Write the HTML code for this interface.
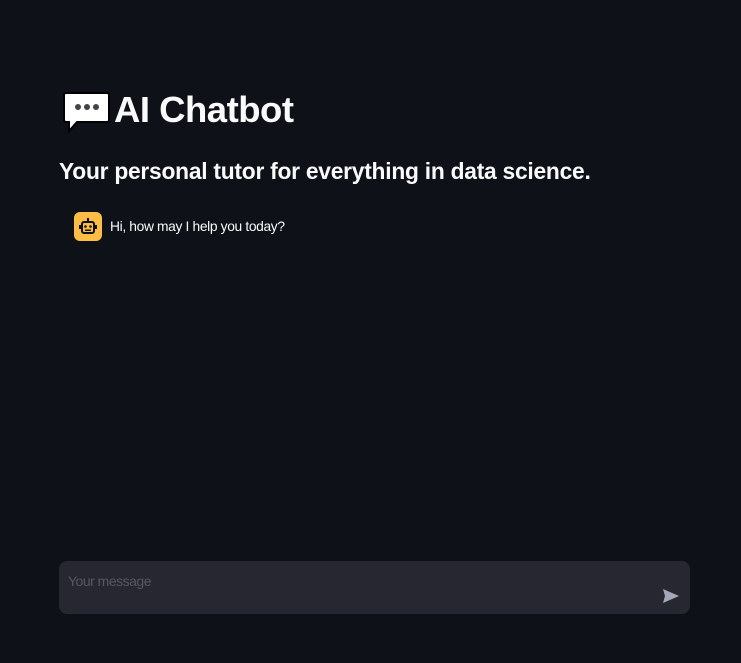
<!DOCTYPE html>
<html><head><style>
html,body{margin:0;padding:0;background:#0e1117;width:741px;height:663px;overflow:hidden;font-family:"Liberation Sans",sans-serif;color:#fafafa}
.t{position:absolute;left:114px;top:89px;font-size:36.5px;font-weight:bold;letter-spacing:-0.5px}
.s{position:absolute;left:59px;top:158px;font-size:22.8px;font-weight:bold;letter-spacing:-0.25px}
.av{position:absolute;left:74px;top:212px;width:28px;height:29px;background:#ffbd45;border-radius:6px}
.m{position:absolute;left:110px;top:219px;font-size:13.8px;letter-spacing:-0.35px}
.in{position:absolute;left:59px;top:561px;width:631px;height:53px;background:#262730;border-radius:8px}
.ph{position:absolute;left:9px;top:12px;font-size:14px;color:#555862;letter-spacing:-0.5px}
</style></head><body>
<svg style="position:absolute;left:63px;top:91px" width="48" height="42" viewBox="0 0 48 42">
<path d="M3 2h41a2 2 0 0 1 2 2v25a2 2 0 0 1-2 2H14l-8 9v-9H3a2 2 0 0 1-2-2V4a2 2 0 0 1 2-2z" fill="#fff" stroke="#000" stroke-width="2"/>
<circle cx="15" cy="16" r="3" fill="#444"/><circle cx="24" cy="16" r="3" fill="#444"/><circle cx="33" cy="16" r="3" fill="#444"/>
</svg>
<div class="t">AI Chatbot</div>
<div class="s">Your personal tutor for everything in data science.</div>
<div class="av"><svg width="28" height="29" viewBox="0 0 28 29"><rect x="8" y="10" width="12" height="11" rx="2" fill="none" stroke="#0e1117" stroke-width="2"/><rect x="13" y="6" width="2" height="4" fill="#0e1117"/><circle cx="11.5" cy="14.5" r="1.3" fill="#0e1117"/><circle cx="16.5" cy="14.5" r="1.3" fill="#0e1117"/><rect x="11" y="17.5" width="6" height="1.5" fill="#0e1117"/><rect x="5" y="13" width="2" height="4" fill="#0e1117"/><rect x="21" y="13" width="2" height="4" fill="#0e1117"/></svg></div>
<div class="m">Hi, how may I help you today?</div>
<div class="in"><div class="ph">Your message</div>
<svg style="position:absolute;left:603px;top:27px" width="18" height="16" viewBox="0 0 18 16"><path d="M1 1L17 8L1 15L3 8z" fill="#a3a8b8"/></svg></div>
</body></html>
